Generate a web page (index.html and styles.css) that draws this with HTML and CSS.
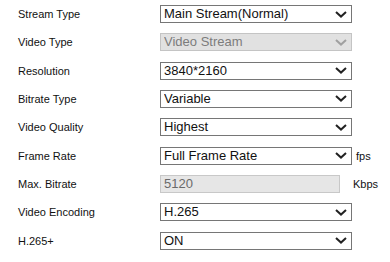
FILE: index.html
```html
<!DOCTYPE html>
<html lang="en">
<head>
  <meta charset="UTF-8">
  <title>Video Settings</title>
  <link rel="stylesheet" href="styles.css">
</head>
<body>

  <div class="settings">
    <div class="row">
      <label class="label">Stream Type</label>
      <select class="field"><option>Main Stream(Normal)</option></select>
    </div>
    <div class="row">
      <label class="label">Video Type</label>
      <select class="field locked" tabindex="-1"><option>Video Stream</option></select>
    </div>
    <div class="row">
      <label class="label">Resolution</label>
      <select class="field"><option>3840*2160</option></select>
    </div>
    <div class="row">
      <label class="label">Bitrate Type</label>
      <select class="field"><option>Variable</option></select>
    </div>
    <div class="row">
      <label class="label">Video Quality</label>
      <select class="field"><option>Highest</option></select>
    </div>
    <div class="row">
      <label class="label">Frame Rate</label>
      <select class="field"><option>Full Frame Rate</option></select>
      <span class="unit">fps</span>
    </div>
    <div class="row">
      <label class="label">Max. Bitrate</label>
      <input type="text" class="field text-field locked" value="5120" readonly>
      <span class="unit unit-wide">Kbps</span>
    </div>
    <div class="row">
      <label class="label">Video Encoding</label>
      <select class="field"><option>H.265</option></select>
    </div>
    <div class="row">
      <label class="label">H.265+</label>
      <select class="field"><option>ON</option></select>
    </div>
  </div>

</body>
</html>
```

FILE: styles.css
```css
body {
  font-family: "Liberation Sans", Arial, sans-serif;
  margin: 0;
  padding: 0;
  background-color: #fff;
  color: #111;
}
.settings {
  display: grid;
  grid-auto-rows: 18px;
  row-gap: 10.33px;
  padding-top: 5px;
}
.row {
  display: flex;
  align-items: center;
}
.label {
  width: 142px;
  padding-left: 18px;
  font-size: 11px;
  color: #111;
}
.field {
  box-sizing: border-box;
  width: 192px;
  height: 18px;
  margin: 0;
  padding: 0 0 0 3px;
  border: 1px solid #767676;
  border-radius: 0;
  background-color: #fff;
  font-family: "Liberation Sans", Arial, sans-serif;
  font-size: 13px;
  line-height: 16px;
  color: #111;
  appearance: none;
  -webkit-appearance: none;
  background-image: url("data:image/svg+xml,%3Csvg xmlns='http://www.w3.org/2000/svg' width='12' height='7' viewBox='0 0 12 7'%3E%3Cpath d='M1 1l5 4.6L11 1' fill='none' stroke='%23222' stroke-width='2'/%3E%3C/svg%3E");
  background-repeat: no-repeat;
  background-position: right 4px center;
  outline: none;
}
select.locked {
  pointer-events: none;
  background-color: #e1e1e1;
  border-color: #c4c4c4;
  color: #7c7c7c;
  background-image: url("data:image/svg+xml,%3Csvg xmlns='http://www.w3.org/2000/svg' width='12' height='7' viewBox='0 0 12 7'%3E%3Cpath d='M1 1l5 4.6L11 1' fill='none' stroke='%23a0a0a0' stroke-width='2'/%3E%3C/svg%3E");
}
.text-field {
  width: 180px;
  background-image: none;
}
.text-field.locked {
  background-color: #e6e6e6;
  border-color: #c8c8c8;
  color: #6a6a6a;
}
.unit {
  margin-left: 4px;
  font-size: 11px;
  color: #111;
}
.unit-wide {
  margin-left: 13px;
}
```
